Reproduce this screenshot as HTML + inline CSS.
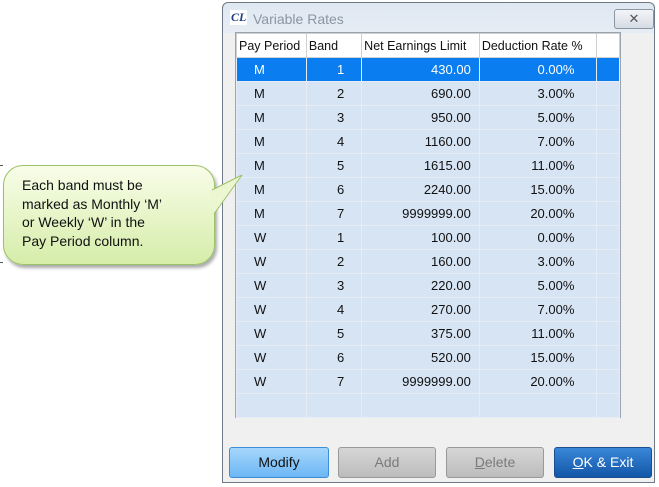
<!DOCTYPE html><html><head><style>
body{margin:0;width:659px;height:487px;background:#fff;position:relative;overflow:hidden;font-family:"Liberation Sans",Arial,sans-serif}
.win{position:absolute;left:222px;top:2px;width:433px;height:481px;border:1px solid #6e7a88;border-radius:6px 6px 0 0;box-sizing:border-box;background:linear-gradient(#dfe7f1,#e6edf5 30px,#f0f0f0 30px)}
.title{position:absolute;left:30px;top:8px;font-size:14px;color:#8a96a3}
.logo{position:absolute;left:7px;top:7px;font:italic bold 12px "Liberation Serif",serif;color:#1d3f8a;background:#fff;padding:0 1px}
.xbtn{position:absolute;left:391px;top:6px;width:40px;height:20px;border:1px solid #8b96a3;border-radius:3px;background:linear-gradient(#f3f5f8,#d6dce4);box-sizing:border-box;text-align:center;font-size:13px;color:#555;line-height:18px}
.grid{position:absolute;left:235px;top:32px;width:386px;height:386px;border:1px solid #9aa3ae;box-sizing:border-box;background:#d6e4f4}
table{border-collapse:collapse;font-size:13px;position:absolute;left:0;top:0}
td{height:23px;border:1px solid #e6edf6;padding:0 4px;color:#111;white-space:nowrap}
tr.h td{background:#fff;border-color:#d0d0d0;height:23px;padding:0 2px;font-size:12.5px}
tr.s td{background:#0a7ef0;color:#fff}
td:nth-child(1){padding-left:17px}
td:nth-child(2){text-align:right;padding-right:17px}
td:nth-child(3){text-align:right;padding-right:8px}
td:nth-child(4){text-align:right;padding-right:22px}
tr.h td{text-align:left!important;padding:0 2px!important}
.btn{position:absolute;top:447px;height:31px;border-radius:3px;box-sizing:border-box;text-align:center;line-height:29px;font-size:14px}
.callout{position:absolute;left:3px;top:165px;width:212px;height:100px;border:1px solid #9cc269;border-radius:20px;background:linear-gradient(#f9fde9,#d5eda9);box-shadow:2px 3px 3px #aaa;box-sizing:border-box}
.ct{position:absolute;left:22px;top:176px;font-size:14px;line-height:18.5px;color:#111}
</style></head><body>
<div style="position:absolute;left:0;top:165px;width:3px;height:1px;background:#555"></div>
<div style="position:absolute;left:0;top:262px;width:3px;height:1px;background:#555"></div>
<div class="win">
<span class="logo">CL</span><span class="title">Variable Rates</span>
<div class="xbtn">✕</div>
</div>
<div class="grid"><table>
<tr class="h"><td style="width:65px">Pay Period</td><td style="width:51px">Band</td><td style="width:113px">Net Earnings Limit</td><td style="width:113px">Deduction Rate %</td><td style="width:18px"></td></tr>
<tr class="s"><td>M</td><td>1</td><td>430.00</td><td>0.00%</td><td></td></tr>
<tr><td>M</td><td>2</td><td>690.00</td><td>3.00%</td><td></td></tr>
<tr><td>M</td><td>3</td><td>950.00</td><td>5.00%</td><td></td></tr>
<tr><td>M</td><td>4</td><td>1160.00</td><td>7.00%</td><td></td></tr>
<tr><td>M</td><td>5</td><td>1615.00</td><td>11.00%</td><td></td></tr>
<tr><td>M</td><td>6</td><td>2240.00</td><td>15.00%</td><td></td></tr>
<tr><td>M</td><td>7</td><td>9999999.00</td><td>20.00%</td><td></td></tr>
<tr><td>W</td><td>1</td><td>100.00</td><td>0.00%</td><td></td></tr>
<tr><td>W</td><td>2</td><td>160.00</td><td>3.00%</td><td></td></tr>
<tr><td>W</td><td>3</td><td>220.00</td><td>5.00%</td><td></td></tr>
<tr><td>W</td><td>4</td><td>270.00</td><td>7.00%</td><td></td></tr>
<tr><td>W</td><td>5</td><td>375.00</td><td>11.00%</td><td></td></tr>
<tr><td>W</td><td>6</td><td>520.00</td><td>15.00%</td><td></td></tr>
<tr><td>W</td><td>7</td><td>9999999.00</td><td>20.00%</td><td></td></tr>
<tr><td></td><td></td><td></td><td></td><td></td></tr>
</table></div>
<div class="btn" style="left:229px;width:100px;border:1px solid #3c8fd6;background:linear-gradient(#a6d6fb,#6cb7f5);color:#111">Modify</div>
<div class="btn" style="left:338px;width:98px;border:1px solid #999;background:linear-gradient(#d6d6d6,#bcbcbc);color:#7a7a7a">Add</div>
<div class="btn" style="left:446px;width:98px;border:1px solid #999;background:linear-gradient(#d6d6d6,#bcbcbc);color:#7a7a7a"><u>D</u>elete</div>
<div class="btn" style="left:554px;width:98px;border:1px solid #1b4f8f;background:linear-gradient(#3a86d8,#1257a8);color:#fff"><u>O</u>K &amp; Exit</div>
<div class="callout"></div>
<svg style="position:absolute;left:0;top:0" width="659" height="487"><polygon points="210,191 242,175 214,213" fill="#ecf7d1"/><polyline points="212,190 242,175 214,214" fill="none" stroke="#9cc269"/></svg>
<div class="ct">Each band must be<br>marked as Monthly ‘M’<br>or Weekly ‘W’ in the<br>Pay Period column.</div>
</body></html>
